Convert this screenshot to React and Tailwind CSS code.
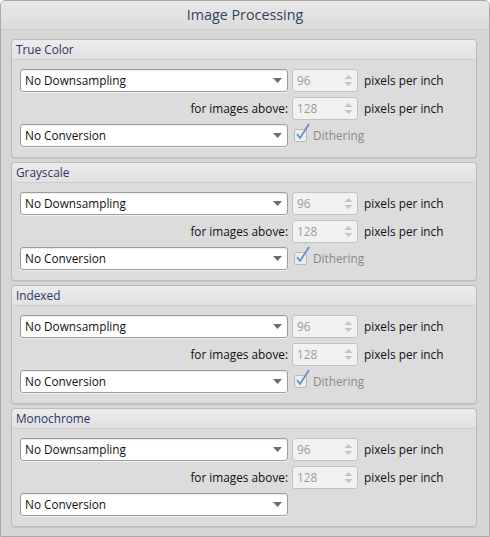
import React from "react";

const font = { fontFamily: '"Open Sans", "Noto Sans", sans-serif' };

const Arrow = () => (
  <svg width="9" height="5" viewBox="0 0 9 5" className="shrink-0">
    <path d="M0 0 L9 0 L4.5 5 Z" fill="#6e6e6e" />
  </svg>
);

const Dropdown = ({ value }) => (
  <div className="flex items-center justify-between w-[268px] h-[23px] bg-white border border-[#9c9c9c] rounded-[3px] pl-[4px] pr-[5px] shadow-[inset_0_1px_1px_rgba(0,0,0,0.08),0_1px_0_rgba(255,255,255,0.6)]">
    <span className="text-[11.8px] text-[#111] leading-none">{value}</span>
    <Arrow />
  </div>
);

const Spin = ({ value }) => (
  <div className="flex items-center justify-between w-[66px] h-[23px] bg-[#f1f1f1] border border-[#c2c2c2] rounded-[3px] pl-[4px] pr-[4px]">
    <span className="text-[11.8px] text-[#9b9b9b] leading-none">{value}</span>
    <svg width="9" height="13" viewBox="0 0 9 13">
      <path d="M0.5 5 L4.5 1 L8.5 5 Z" fill="#c4c4c4" />
      <path d="M0.5 8 L4.5 12 L8.5 8 Z" fill="#c4c4c4" />
    </svg>
  </div>
);

const Check = () => (
  <div className="flex items-center gap-[6px] ml-[2px]">
    <div className="relative w-[13px] h-[13px] border border-[#b9b9b9] rounded-[2px] bg-[#ededed]">
      <svg width="16" height="18" viewBox="0 0 16 18" className="absolute -top-[7px] left-[0px]">
        <path d="M2 11 L5 15 L14 1" fill="none" stroke="#6a8fc7" strokeWidth="1.8" strokeLinejoin="round" />
      </svg>
    </div>
    <span className="text-[11.8px] text-[#8a8a8a] leading-none">Dithering</span>
  </div>
);

const Group = ({ title, dithering = true }) => (
  <div className="border border-[#bcbcbc] rounded-[4px] bg-[#dcdcdc] shadow-[0_1px_1px_rgba(0,0,0,0.08)]">
    <div className="h-[20px] flex items-center px-[4px] bg-gradient-to-b from-[#ececec] to-[#e1e1e1] border-b border-[#cfcfcf] rounded-t-[4px]">
      <span className="text-[11.8px] text-[#2a356a] leading-none">{title}</span>
    </div>
    <div className="flex flex-col pl-[8px] pt-[9px] pb-[10px]">
      <div className="flex items-center">
        <Dropdown value="No Downsampling" />
        <div className="ml-[4px]"><Spin value="96" /></div>
        <span className="ml-[6px] text-[11.8px] text-[#111] leading-none">pixels per inch</span>
      </div>
      <div className="flex items-center mt-[5px]">
        <span className="w-[268px] text-right text-[11.8px] text-[#111] leading-none">for images above:</span>
        <div className="ml-[4px]"><Spin value="128" /></div>
        <span className="ml-[6px] text-[11.8px] text-[#111] leading-none">pixels per inch</span>
      </div>
      <div className="flex items-center mt-[4px]">
        <Dropdown value="No Conversion" />
        {dithering && <div className="ml-[4px]"><Check /></div>}
      </div>
    </div>
  </div>
);

export default function App() {
  return (
    <div style={font} className="w-[490px] h-[537px] flex flex-col bg-[#d6d6d6] border border-[#a9a9a9] rounded-t-[5px] overflow-hidden">
      <div className="h-[29px] shrink-0 flex items-center justify-center bg-gradient-to-b from-[#e8e8e8] to-[#dcdcdc] border-b border-[#cdcdcd]">
        <h1 className="text-[14.3px] text-[#34435c] leading-none">Image Processing</h1>
      </div>
      <div className="flex flex-col gap-[4px] pt-[9px] pl-[10px] pr-[12px]">
        <Group title="True Color" />
        <Group title="Grayscale" />
        <Group title="Indexed" />
        <Group title="Monochrome" dithering={false} />
      </div>
    </div>
  );
}
